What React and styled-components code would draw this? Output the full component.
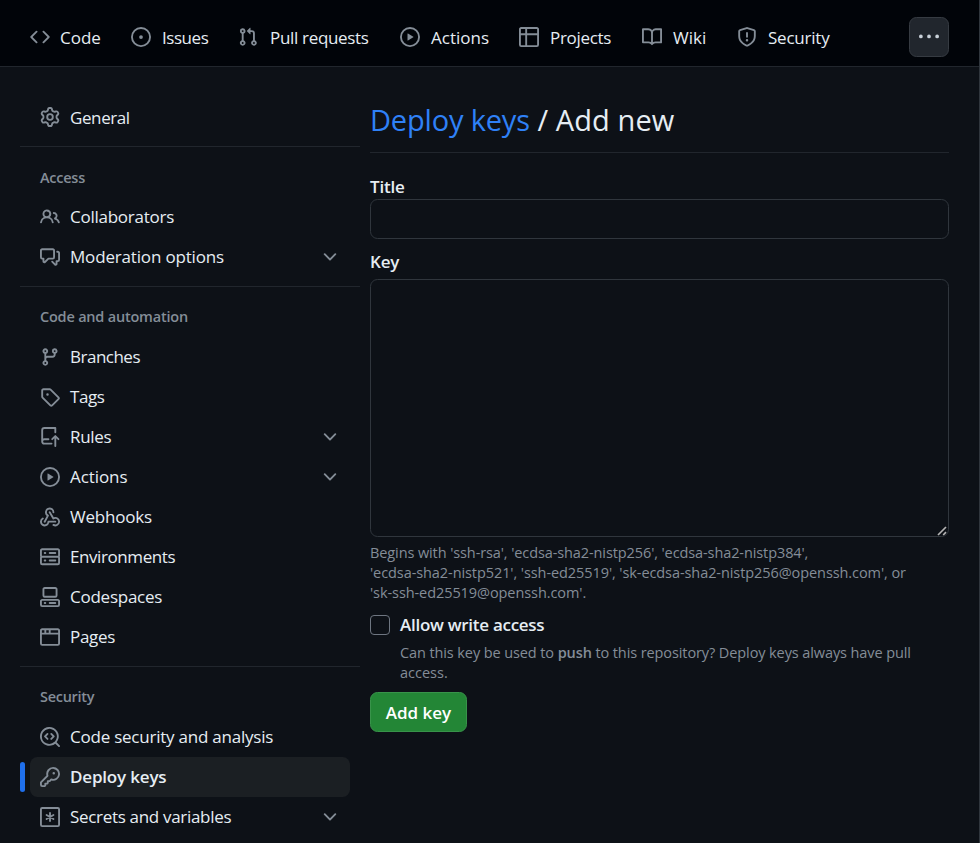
import React from "react";
import styled, { createGlobalStyle } from "styled-components";

const GlobalStyle = createGlobalStyle`
  * { box-sizing: border-box; }
  html, body { margin: 0; background: #0d1117; overflow: hidden; }
  body { font-family: "Open Sans", "Noto Sans", sans-serif; font-size: 17px; color: #e6edf3; }
`;

const paths = {
  code: ["m11.28 3.22 4.25 4.25a.75.75 0 0 1 0 1.06l-4.25 4.25a.749.749 0 0 1-1.275-.326.749.749 0 0 1 .215-.734L13.94 8l-3.72-3.72a.749.749 0 0 1 .326-1.275.749.749 0 0 1 .734.215Zm-6.56 0a.751.751 0 0 1 1.042.018.751.751 0 0 1 .018 1.042L2.06 8l3.72 3.72a.749.749 0 0 1-.326 1.275.749.749 0 0 1-.734-.215L.47 8.53a.75.75 0 0 1 0-1.06Z"],
  issue: ["M8 9.5a1.5 1.5 0 1 0 0-3 1.5 1.5 0 0 0 0 3Z", "M8 0a8 8 0 1 1 0 16A8 8 0 0 1 8 0ZM1.5 8a6.5 6.5 0 1 0 13 0 6.5 6.5 0 0 0-13 0Z"],
  pull: ["M1.5 3.25a2.25 2.25 0 1 1 3 2.122v5.256a2.251 2.251 0 1 1-1.5 0V5.372A2.25 2.25 0 0 1 1.5 3.25Zm5.677-.177L9.573.677A.25.25 0 0 1 10 .854V2.5h1A2.5 2.5 0 0 1 13.5 5v5.628a2.251 2.251 0 1 1-1.5 0V5a1 1 0 0 0-1-1h-1v1.646a.25.25 0 0 1-.427.177L7.177 3.427a.25.25 0 0 1 0-.354ZM3.75 2.5a.75.75 0 1 0 0 1.5.75.75 0 0 0 0-1.5Zm0 9.5a.75.75 0 1 0 0 1.5.75.75 0 0 0 0-1.5Zm8.25.75a.75.75 0 1 0 1.5 0 .75.75 0 0 0-1.5 0Z"],
  play: ["M8 0a8 8 0 1 1 0 16A8 8 0 0 1 8 0ZM1.5 8a6.5 6.5 0 1 0 13 0 6.5 6.5 0 0 0-13 0Zm4.879-2.773 4.264 2.559a.25.25 0 0 1 0 .428l-4.264 2.559A.25.25 0 0 1 6 10.559V5.442a.25.25 0 0 1 .379-.215Z"],
  table: ["M0 1.75C0 .784.784 0 1.75 0h12.5C15.216 0 16 .784 16 1.75v12.5A1.75 1.75 0 0 1 14.25 16H1.75A1.75 1.75 0 0 1 0 14.25ZM6.5 6.5v8h7.75a.25.25 0 0 0 .25-.25V6.5Zm8-1.5V1.75a.25.25 0 0 0-.25-.25H6.5V5Zm-13 1.5v7.75c0 .138.112.25.25.25H5v-8ZM5 5V1.5H1.75a.25.25 0 0 0-.25.25V5Z"],
  book: ["M0 1.75A.75.75 0 0 1 .75 1h4.253c1.227 0 2.317.59 3 1.501A3.743 3.743 0 0 1 11.006 1h4.245a.75.75 0 0 1 .75.75v10.5a.75.75 0 0 1-.75.75h-4.507a2.25 2.25 0 0 0-1.591.659l-.622.621a.75.75 0 0 1-1.06 0l-.622-.621A2.25 2.25 0 0 0 5.258 13H.75a.75.75 0 0 1-.75-.75Zm7.251 10.324.004-5.073-.002-2.253A2.25 2.25 0 0 0 5.003 2.5H1.5v9h3.757a3.75 3.75 0 0 1 1.994.574ZM8.755 4.75l-.004 7.322a3.752 3.752 0 0 1 1.992-.572H14.5v-9h-3.495a2.25 2.25 0 0 0-2.25 2.25Z"],
  shield: ["M7.467.133a1.748 1.748 0 0 1 1.066 0l5.25 1.68A1.75 1.75 0 0 1 15 3.48V7c0 1.566-.32 3.182-1.303 4.682-.983 1.498-2.585 2.813-5.032 3.855a1.697 1.697 0 0 1-1.33 0c-2.447-1.042-4.049-2.357-5.032-3.855C1.32 10.182 1 8.566 1 7V3.48a1.75 1.75 0 0 1 1.217-1.667Zm.61 1.429a.25.25 0 0 0-.153 0l-5.25 1.68a.25.25 0 0 0-.174.238V7c0 1.358.275 2.666 1.057 3.86.784 1.194 2.121 2.34 4.366 3.297a.196.196 0 0 0 .154 0c2.245-.956 3.582-2.104 4.366-3.298C13.225 9.666 13.5 8.36 13.5 7V3.48a.251.251 0 0 0-.174-.237l-5.25-1.68ZM8.75 4.75v3a.75.75 0 0 1-1.5 0v-3a.75.75 0 0 1 1.5 0ZM9 10.5a1 1 0 1 1-2 0 1 1 0 0 1 2 0Z"],
  kebab: ["M8 9a1.5 1.5 0 1 0 0-3 1.5 1.5 0 0 0 0 3ZM1.5 9a1.5 1.5 0 1 0 0-3 1.5 1.5 0 0 0 0 3Zm13 0a1.5 1.5 0 1 0 0-3 1.5 1.5 0 0 0 0 3Z"],
  gear: ["M8 0a8.2 8.2 0 0 1 .701.031C9.444.095 9.99.645 10.16 1.29l.288 1.107c.018.066.079.158.212.224.231.114.454.243.668.386.123.082.233.09.299.071l1.103-.303c.644-.176 1.392.021 1.82.63.27.385.506.792.704 1.218.315.675.111 1.422-.364 1.891l-.814.806c-.049.048-.098.147-.088.294.016.257.016.515 0 .772-.01.147.038.246.088.294l.814.806c.475.469.679 1.216.364 1.891a7.977 7.977 0 0 1-.704 1.217c-.428.61-1.176.807-1.82.63l-1.102-.302c-.067-.019-.177-.011-.3.071a5.909 5.909 0 0 1-.668.386c-.133.066-.194.158-.211.224l-.29 1.106c-.168.646-.715 1.196-1.458 1.26a8.006 8.006 0 0 1-1.402 0c-.743-.064-1.289-.614-1.458-1.26l-.289-1.106c-.018-.066-.079-.158-.212-.224a5.738 5.738 0 0 1-.668-.386c-.123-.082-.233-.09-.299-.071l-1.103.303c-.644.176-1.392-.021-1.82-.63a8.12 8.12 0 0 1-.704-1.218c-.315-.675-.111-1.422.363-1.891l.815-.806c.05-.048.098-.147.088-.294a6.214 6.214 0 0 1 0-.772c.01-.147-.038-.246-.088-.294l-.815-.806C.635 6.045.431 5.298.746 4.623a7.92 7.92 0 0 1 .704-1.217c.428-.61 1.176-.807 1.82-.63l1.102.302c.067.019.177.011.3-.071.214-.143.437-.272.668-.386.133-.066.194-.158.211-.224l.29-1.106C6.009.645 6.556.095 7.299.03 7.53.01 7.764 0 8 0Zm-.571 1.525c-.036.003-.108.036-.137.146l-.289 1.105c-.147.561-.549.967-.998 1.189-.173.086-.34.183-.5.29-.417.278-.97.423-1.529.27l-1.103-.303c-.109-.03-.175.016-.195.045-.22.312-.412.644-.573.99-.014.031-.021.11.059.19l.815.806c.411.406.562.957.53 1.456a4.709 4.709 0 0 0 0 .582c.032.499-.119 1.05-.53 1.456l-.815.806c-.081.08-.073.159-.059.19.162.346.353.677.573.989.02.03.085.076.195.046l1.102-.303c.56-.153 1.113-.008 1.53.27.161.107.328.204.501.29.447.222.85.629.997 1.189l.289 1.105c.029.109.101.143.137.146a6.6 6.6 0 0 0 1.142 0c.036-.003.108-.036.137-.146l.289-1.105c.147-.561.549-.967.998-1.189.173-.086.34-.183.5-.29.417-.278.97-.423 1.529-.27l1.103.303c.109.029.175-.016.195-.045.22-.313.411-.644.573-.99.014-.031.021-.11-.059-.19l-.815-.806c-.411-.406-.562-.957-.53-1.456a4.709 4.709 0 0 0 0-.582c-.032-.499.119-1.05.53-1.456l.815-.806c.081-.08.073-.159.059-.19a6.464 6.464 0 0 0-.573-.989c-.02-.03-.085-.076-.195-.046l-1.102.303c-.56.153-1.113.008-1.53-.27a4.44 4.44 0 0 0-.501-.29c-.447-.222-.85-.629-.997-1.189l-.289-1.105c-.029-.11-.101-.143-.137-.146a6.6 6.6 0 0 0-1.142 0ZM11 8a3 3 0 1 1-6 0 3 3 0 0 1 6 0ZM9.5 8a1.5 1.5 0 1 0-3.001.001A1.5 1.5 0 0 0 9.5 8Z"],
  people: ["M2 5.5a3.5 3.5 0 1 1 5.898 2.549 5.508 5.508 0 0 1 3.034 4.084.75.75 0 1 1-1.482.235 4 4 0 0 0-7.9 0 .75.75 0 0 1-1.482-.236A5.507 5.507 0 0 1 3.102 8.05 3.493 3.493 0 0 1 2 5.5ZM11 4a3.001 3.001 0 0 1 2.22 5.018 5.01 5.01 0 0 1 2.56 3.012.749.749 0 0 1-.885.954.752.752 0 0 1-.549-.514 3.507 3.507 0 0 0-2.522-2.372.75.75 0 0 1-.574-.73v-.352a.75.75 0 0 1 .416-.672A1.5 1.5 0 0 0 11 5.5.75.75 0 0 1 11 4Zm-5.5-.5a2 2 0 1 0-.001 3.999A2 2 0 0 0 5.5 3.5Z"],
  discussion: ["M1.75 1h8.5c.966 0 1.75.784 1.75 1.75v5.5A1.75 1.75 0 0 1 10.25 10H7.061l-2.574 2.573A1.458 1.458 0 0 1 2 11.543V10h-.25A1.75 1.75 0 0 1 0 8.25v-5.5C0 1.784.784 1 1.75 1ZM1.5 2.75v5.5c0 .138.112.25.25.25h1a.75.75 0 0 1 .75.75v2.19l2.72-2.72a.749.749 0 0 1 .53-.22h3.5a.25.25 0 0 0 .25-.25v-5.5a.25.25 0 0 0-.25-.25h-8.5a.25.25 0 0 0-.25.25Zm13 2a.25.25 0 0 0-.25-.25h-.5a.75.75 0 0 1 0-1.5h.5c.966 0 1.75.784 1.75 1.75v5.5A1.75 1.75 0 0 1 14.25 12H14v1.543a1.458 1.458 0 0 1-2.487 1.03L9.22 12.28a.749.749 0 0 1 .326-1.275.749.749 0 0 1 .734.215l2.22 2.22v-2.19a.75.75 0 0 1 .75-.75h1a.25.25 0 0 0 .25-.25Z"],
  chevron: ["M12.78 5.22a.749.749 0 0 1 0 1.06l-4.25 4.25a.749.749 0 0 1-1.06 0L3.22 6.28a.749.749 0 1 1 1.06-1.06L8 8.939l3.72-3.719a.749.749 0 0 1 1.06 0Z"],
  branch: ["M9.5 3.25a2.25 2.25 0 1 1 3 2.122V6A2.5 2.5 0 0 1 10 8.5H6a1 1 0 0 0-1 1v1.128a2.251 2.251 0 1 1-1.5 0V5.372a2.25 2.25 0 1 1 1.5 0v1.836A2.493 2.493 0 0 1 6 7h4a1 1 0 0 0 1-1v-.628A2.25 2.25 0 0 1 9.5 3.25Zm-6 0a.75.75 0 1 0 1.5 0 .75.75 0 0 0-1.5 0Zm8.25-.75a.75.75 0 1 0 0 1.5.75.75 0 0 0 0-1.5ZM4.25 12a.75.75 0 1 0 0 1.5.75.75 0 0 0 0-1.5Z"],
  tag: ["M1 7.775V2.75C1 1.784 1.784 1 2.75 1h5.025c.464 0 .91.184 1.238.513l6.25 6.25a1.75 1.75 0 0 1 0 2.474l-5.026 5.026a1.75 1.75 0 0 1-2.474 0l-6.25-6.25A1.752 1.752 0 0 1 1 7.775Zm1.5 0c0 .066.026.13.073.177l6.25 6.25a.25.25 0 0 0 .354 0l5.025-5.025a.25.25 0 0 0 0-.354l-6.25-6.25a.25.25 0 0 0-.177-.073H2.75a.25.25 0 0 0-.25.25ZM6 5a1 1 0 1 1 0 2 1 1 0 0 1 0-2Z"],
  push: ["M1 2.5A2.5 2.5 0 0 1 3.5 0h8.75a.75.75 0 0 1 .75.75v3.5a.75.75 0 0 1-1.5 0V1.5h-8a1 1 0 0 0-1 1v6.708A2.493 2.493 0 0 1 3.5 9h3.25a.75.75 0 0 1 0 1.5H3.5a1 1 0 0 0 0 2h5.75a.75.75 0 0 1 0 1.5H3.5A2.5 2.5 0 0 1 1 11.5Zm13.23 7.79-1.23-1.224v6.184a.75.75 0 0 1-1.5 0V9.066L10.28 10.28a.75.75 0 0 1-1.06-1.06l2.505-2.504a.75.75 0 0 1 1.06 0L15.29 9.22a.75.75 0 1 1-1.06 1.07Z"],
  webhook: ["M5.5 4.25a2.25 2.25 0 0 1 4.5 0 .75.75 0 0 0 1.5 0 3.75 3.75 0 1 0-6.14 2.889l-2.272 4.258a.75.75 0 0 0 1.324.706L7 7.25a.75.75 0 0 0-.309-1.015A2.25 2.25 0 0 1 5.5 4.25Z", "M7.364 3.607a.75.75 0 0 1 1.03.257l2.608 4.349a3.75 3.75 0 1 1-.628 6.785.75.75 0 0 1 .752-1.299 2.25 2.25 0 1 0-.033-3.88.75.75 0 0 1-1.03-.256L7.107 4.636a.75.75 0 0 1 .257-1.03Z", "M2.9 8.776A.75.75 0 0 1 2.625 9.8 2.25 2.25 0 1 0 6 11.75a.75.75 0 0 1 .75-.751h5.5a.75.75 0 0 1 0 1.5H7.425a3.751 3.751 0 1 1-5.55-3.998.75.75 0 0 1 1.024.274Z"],
  server: ["M1.75 1h12.5c.966 0 1.75.784 1.75 1.75v4c0 .372-.116.717-.314 1 .198.283.314.628.314 1v4a1.75 1.75 0 0 1-1.75 1.75H1.75A1.75 1.75 0 0 1 0 12.75v-4c0-.358.109-.707.314-1a1.739 1.739 0 0 1-.314-1v-4C0 1.784.784 1 1.75 1ZM1.5 2.75v4c0 .138.112.25.25.25h12.5a.25.25 0 0 0 .25-.25v-4a.25.25 0 0 0-.25-.25H1.75a.25.25 0 0 0-.25.25Zm.25 5.75a.25.25 0 0 0-.25.25v4c0 .138.112.25.25.25h12.5a.25.25 0 0 0 .25-.25v-4a.25.25 0 0 0-.25-.25ZM7 4.75A.75.75 0 0 1 7.75 4h4.5a.75.75 0 0 1 0 1.5h-4.5A.75.75 0 0 1 7 4.75ZM7.75 10h4.5a.75.75 0 0 1 0 1.5h-4.5a.75.75 0 0 1 0-1.5ZM3 4.75A.75.75 0 0 1 3.75 4h.5a.75.75 0 0 1 0 1.5h-.5A.75.75 0 0 1 3 4.75ZM3.75 10h.5a.75.75 0 0 1 0 1.5h-.5a.75.75 0 0 1 0-1.5Z"],
  codespaces: ["M0 11.25c0-.966.784-1.75 1.75-1.75h12.5c.966 0 1.75.784 1.75 1.75v3A1.75 1.75 0 0 1 14.25 16H1.75A1.75 1.75 0 0 1 0 14.25Zm2-9.5C2 .784 2.784 0 3.75 0h8.5C13.216 0 14 .784 14 1.75v5a1.75 1.75 0 0 1-1.75 1.75h-8.5A1.75 1.75 0 0 1 2 6.75Zm1.75-.25a.25.25 0 0 0-.25.25v5c0 .138.112.25.25.25h8.5a.25.25 0 0 0 .25-.25v-5a.25.25 0 0 0-.25-.25Zm-2 9.5a.25.25 0 0 0-.25.25v3c0 .138.112.25.25.25h12.5a.25.25 0 0 0 .25-.25v-3a.25.25 0 0 0-.25-.25Z", "M7 12.75a.75.75 0 0 1 .75-.75h4.5a.75.75 0 0 1 0 1.5h-4.5a.75.75 0 0 1-.75-.75Zm-4 0a.75.75 0 0 1 .75-.75h.5a.75.75 0 0 1 0 1.5h-.5a.75.75 0 0 1-.75-.75Z"],
  browser: ["M0 2.75C0 1.784.784 1 1.75 1h12.5c.966 0 1.75.784 1.75 1.75v10.5A1.75 1.75 0 0 1 14.25 15H1.75A1.75 1.75 0 0 1 0 13.25ZM14.5 6h-13v7.25c0 .138.112.25.25.25h12.5a.25.25 0 0 0 .25-.25Zm-6-3.5v2h6V2.75a.25.25 0 0 0-.25-.25ZM5 2.5v2h2v-2Zm-3.25 0a.25.25 0 0 0-.25.25V4.5h2v-2Z"],
  codescan: ["M8.47 4.97a.75.75 0 0 0 0 1.06L9.94 7.5 8.47 8.97a.75.75 0 1 0 1.06 1.06l2-2a.75.75 0 0 0 0-1.06l-2-2a.75.75 0 0 0-1.06 0ZM6.53 6.03a.75.75 0 0 0-1.06-1.06l-2 2a.75.75 0 0 0 0 1.06l2 2a.75.75 0 1 0 1.06-1.06L5.06 7.5l1.47-1.47Z", "M12.246 13.307a7.501 7.501 0 1 1 1.06-1.06l2.474 2.473a.749.749 0 1 1-1.06 1.06l-2.474-2.473ZM1.5 7.5a6.002 6.002 0 0 0 3.608 5.504 6.002 6.002 0 0 0 6.486-1.117.748.748 0 0 1 .292-.293A6 6 0 1 0 1.5 7.5Z"],
  key: ["M10.5 0a5.499 5.499 0 1 1-1.288 10.848l-.932.932a.749.749 0 0 1-.53.22H7v.75a.749.749 0 0 1-.22.53l-.5.5a.749.749 0 0 1-.53.22H5v.75a.749.749 0 0 1-.22.53l-.5.5a.749.749 0 0 1-.53.22h-2A1.75 1.75 0 0 1 0 14.25v-2c0-.199.079-.389.22-.53l4.932-4.932A5.5 5.5 0 0 1 10.5 0Zm-4 5.5c-.001.431.069.86.205 1.269a.75.75 0 0 1-.181.768L1.5 12.56v1.69c0 .138.112.25.25.25h1.69l.06-.06v-1.19a.75.75 0 0 1 .75-.75h1.19l.06-.06v-1.19a.75.75 0 0 1 .75-.75h1.19l1.023-1.025a.75.75 0 0 1 .768-.18A4 4 0 1 0 6.5 5.5ZM11 6a1 1 0 1 1 0-2 1 1 0 0 1 0 2Z"],
};

const Svg = styled.svg`
  display: block;
  flex: none;
  width: 20px;
  height: 20px;
  fill: currentColor;
  color: ${(p) => p.$color || "#848d97"};
`;

function Icon({ name, color }) {
  if (name === "asterisk") {
    return (
      <Svg viewBox="0 0 16 16" $color={color}>
        <g fill="none" stroke="currentColor" strokeWidth="1.5" strokeLinecap="round">
          <rect x="0.75" y="0.75" width="14.5" height="14.5" rx="1" />
          <path d="M8 4.8v6.4M5.25 6.4l5.5 3.2M5.25 9.6l5.5-3.2" />
        </g>
      </Svg>
    );
  }
  return (
    <Svg viewBox="0 0 16 16" $color={color}>
      {paths[name].map((d) => <path key={d} d={d} />)}
    </Svg>
  );
}

const Page = styled.div`
  height: 843px;
  display: flex;
  flex-direction: column;
  border-right: 1px solid #30363d;
  overflow: hidden;
`;

const TopNav = styled.nav`
  flex: none;
  height: 67px;
  padding: 0 30px;
  display: flex;
  align-items: center;
  background: #010409;
  border-bottom: 1px solid #21262d;
`;

const Tab = styled.a`
  display: flex;
  align-items: center;
  gap: ${(p) => p.$gap}px;
  height: 40px;
  width: ${(p) => p.$width}px;
  margin-top: 8px;
  flex: none;
`;

const Label = styled.span`
  white-space: nowrap;
  line-height: 24px;
  padding-top: ${(p) => (p.$low ? 2 : 0)}px;
  letter-spacing: ${(p) => p.$track || 0}px;
  font-weight: ${(p) => (p.$bold ? 600 : 400)};
`;

const MoreButton = styled.button`
  margin: 8px 0 0 auto;
  width: 40px;
  height: 40px;
  padding: 0;
  display: flex;
  align-items: center;
  justify-content: center;
  background: #21262d;
  border: 1px solid #363b42;
  border-radius: 7.5px;
`;

const Body = styled.div`
  display: flex;
  gap: 10px;
  padding: 30px 30px 0 20px;
`;

const Sidebar = styled.aside`
  width: 340px;
  flex: none;
`;

const Group = styled.section`
  & + & {
    margin-top: 9px;
    padding-top: 10px;
    border-top: 1px solid #21262d;
  }
`;

const GroupTitle = styled.h3`
  margin: 0;
  height: 40px;
  padding: ${(p) => (p.$low ? 1 : 0)}px 20px 0;
  font-size: 14.5px;
  line-height: 40px;
  font-weight: 600;
  color: #848d97;
  letter-spacing: ${(p) => p.$track || 0}px;
`;

const NavItem = styled.a`
  position: relative;
  height: 40px;
  margin: 0 10px;
  padding: 0 10px;
  display: flex;
  align-items: center;
  gap: 10px;
  border-radius: 7.5px;
  background: ${(p) => (p.$active ? "#1b1f23" : "transparent")};

  & > svg:nth-of-type(2) { margin-left: auto; }

  &::before {
    content: "";
    display: ${(p) => (p.$active ? "block" : "none")};
    position: absolute;
    left: -10px;
    top: 5px;
    width: 5px;
    height: 30px;
    border-radius: 7.5px;
    background: #1f6feb;
  }
`;

const Main = styled.main`
  flex: 1;
  min-width: 0;
`;

const Heading = styled.h1`
  margin: 0 0 20px;
  height: 56px;
  padding-top: 3px;
  border-bottom: 1px solid #21262d;
  font-size: 29px;
  line-height: 40px;
  font-weight: 400;
  letter-spacing: 0.1px;
  white-space: nowrap;

  a { color: #2f81f7; letter-spacing: -0.18px; }
`;

const FieldLabel = styled.label`
  display: block;
  height: 26px;
  line-height: ${(p) => (p.$low ? 28 : 26)}px;
  font-weight: 600;
  letter-spacing: -0.2px;
`;

const TextInput = styled.input`
  display: block;
  width: 100%;
  height: 40px;
  margin-bottom: 10px;
  background: #0d1117;
  border: 1px solid #30363d;
  border-radius: 7.5px;
`;

const AreaWrap = styled.div`
  position: relative;
  margin-top: 4px;
`;

const TextArea = styled.textarea`
  display: block;
  width: 100%;
  height: 258px;
  background: #0d1117;
  border: 1px solid #30363d;
  border-radius: 7.5px;
  resize: none;
`;

const Grip = styled.svg`
  position: absolute;
  right: 2px;
  bottom: 1px;
  width: 10px;
  height: 10px;
  fill: none;
  stroke: #b4b4b4;
  stroke-width: 1.7;
`;

const Note = styled.p`
  margin: ${(p) => p.$margin || "0"};
  font-size: 14.5px;
  line-height: 20px;
  color: #848d97;
`;

const NoteLine = styled.span`
  display: block;
  white-space: nowrap;
  letter-spacing: ${(p) => p.$track || 0}px;
  b { font-weight: 600; }
`;

const CheckRow = styled.label`
  display: flex;
  align-items: center;
  gap: 10px;
  height: 24px;
  margin-top: 10px;
`;

const Checkbox = styled.span`
  width: 20px;
  height: 20px;
  border: 1px solid #6e7681;
  border-radius: 4px;
`;

const SubmitButton = styled.button`
  display: flex;
  align-items: center;
  justify-content: center;
  width: 97px;
  height: 40px;
  margin-top: 9px;
  padding: 0;
  color: #fff;
  background: #238636;
  border: 1px solid #38934a;
  border-radius: 7.5px;
  font: inherit;
`;

const tabs = [
  { icon: "code", text: "Code", width: 101, gap: 10 },
  { icon: "issue", text: "Issues", width: 107, gap: 11, track: -0.45 },
  { icon: "pull", text: "Pull requests", width: 162, gap: 12, track: -0.32 },
  { icon: "play", text: "Actions", width: 119, gap: 11 },
  { icon: "table", text: "Projects", width: 123, gap: 11, track: -0.3 },
  { icon: "book", text: "Wiki", width: 95, gap: 11 },
  { icon: "shield", text: "Security", width: 100, gap: 11, track: -0.22 },
];

const groups = [
  { items: [{ icon: "gear", text: "General", track: -0.4, low: true }] },
  {
    title: "Access",
    track: -0.25,
    low: true,
    items: [
      { icon: "people", text: "Collaborators", track: -0.25 },
      { icon: "discussion", text: "Moderation options", more: true, track: -0.17 },
    ],
  },
  {
    title: "Code and automation",
    track: -0.21,
    items: [
      { icon: "branch", text: "Branches", track: -0.5 },
      { icon: "tag", text: "Tags", track: -0.4 },
      { icon: "push", text: "Rules", more: true, track: -0.3 },
      { icon: "play", text: "Actions", more: true, track: -0.08 },
      { icon: "webhook", text: "Webhooks", track: -0.2 },
      { icon: "server", text: "Environments", track: -0.42 },
      { icon: "codespaces", text: "Codespaces", track: -0.25 },
      { icon: "browser", text: "Pages", track: -0.3 },
    ],
  },
  {
    title: "Security",
    track: -0.3,
    items: [
      { icon: "codescan", text: "Code security and analysis", track: -0.23 },
      { icon: "key", text: "Deploy keys", active: true, track: -0.18 },
      { icon: "asterisk", text: "Secrets and variables", more: true, track: -0.31 },
    ],
  },
];

export default function App() {
  return (
    <Page>
      <GlobalStyle />
      <TopNav>
        {tabs.map((t) => (
          <Tab key={t.text} $width={t.width} $gap={t.gap}>
            <Icon name={t.icon} />
            <Label $low $track={t.track}>{t.text}</Label>
          </Tab>
        ))}
        <MoreButton aria-label="More"><Icon name="kebab" color="#c9d1d9" /></MoreButton>
      </TopNav>
      <Body>
        <Sidebar>
          {groups.map((g, i) => (
            <Group key={i}>
              {g.title && <GroupTitle $track={g.track} $low={g.low}>{g.title}</GroupTitle>}
              {g.items.map((it) => (
                <NavItem key={it.text} $active={it.active}>
                  <Icon name={it.icon} />
                  <Label $bold={it.active} $track={it.track} $low={it.low}>{it.text}</Label>
                  {it.more && <Icon name="chevron" />}
                </NavItem>
              ))}
            </Group>
          ))}
        </Sidebar>
        <Main>
          <Heading><a>Deploy keys</a> / Add new</Heading>
          <FieldLabel $low>Title</FieldLabel>
          <TextInput />
          <FieldLabel>Key</FieldLabel>
          <AreaWrap>
            <TextArea />
            <Grip viewBox="0 0 10 10"><path d="M1 9 9 1M6.2 9 9 6.2" /></Grip>
          </AreaWrap>
          <Note $margin="6px 0 0">
            <NoteLine $track={-0.1}>Begins with 'ssh-rsa', 'ecdsa-sha2-nistp256', 'ecdsa-sha2-nistp384',</NoteLine>
            <NoteLine $track={-0.08}>'ecdsa-sha2-nistp521', 'ssh-ed25519', 'sk-ecdsa-sha2-nistp256@openssh.com', or</NoteLine>
            <NoteLine $track={-0.08}>'sk-ssh-ed25519@openssh.com'.</NoteLine>
          </Note>
          <CheckRow>
            <Checkbox />
            <Label $bold $track={-0.28}>Allow write access</Label>
          </CheckRow>
          <Note $margin="6px 0 0 30px">
            <NoteLine $track={-0.1}>Can this key be used to <b>push</b> to this repository? Deploy keys always have pull</NoteLine>
            <NoteLine>access.</NoteLine>
          </Note>
          <SubmitButton><Label $bold $low>Add key</Label></SubmitButton>
        </Main>
      </Body>
    </Page>
  );
}
